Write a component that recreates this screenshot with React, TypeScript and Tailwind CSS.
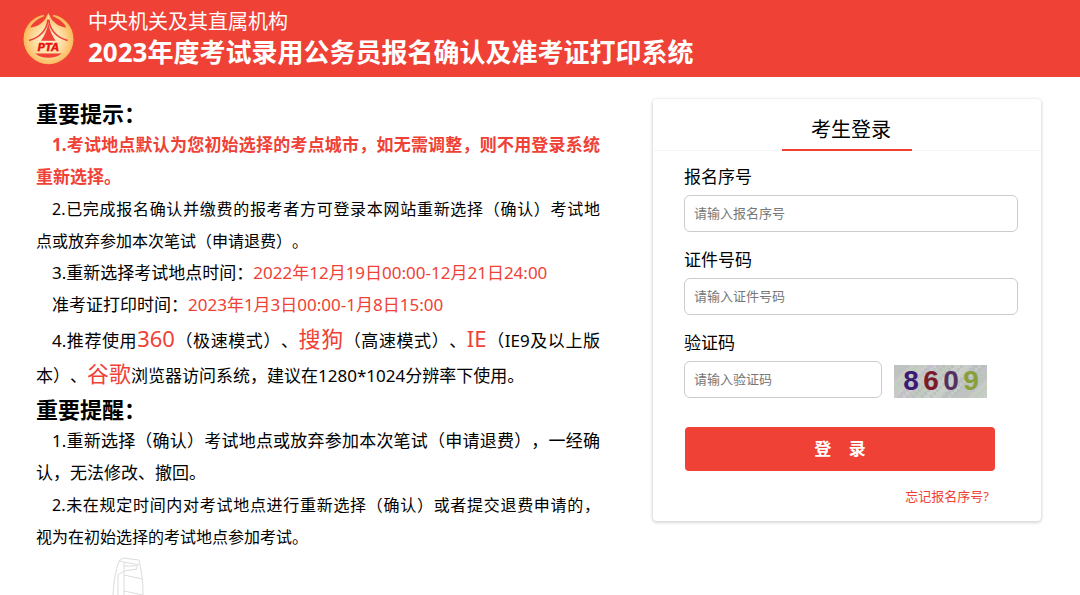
import React from "react";

interface FieldProps {
  id: string;
  label: string;
  placeholder: string;
  narrow?: boolean;
  children?: React.ReactNode;
}

const Logo: React.FC = () => (
  <svg viewBox="24 22 153 158" className="h-[53px] w-[51px] shrink-0" aria-hidden="true">
    <defs>
      <radialGradient id="gold" cx="50%" cy="52%" r="52%">
        <stop offset="0" stopColor="#fff0d0" />
        <stop offset="0.5" stopColor="#fee2ac" />
        <stop offset="1" stopColor="#fbb552" />
      </radialGradient>
    </defs>
    <circle cx="100.5" cy="103" r="75" fill="url(#gold)" />
    {/* gap at the top, with a leaf on each side */}
    <path
      d="M84 24H117L113 34C134 42 148 54 154 68C134 66 118 56 108 40L100 22L92 40C82 56 66 66 46 68C52 54 66 42 88 34Z"
      fill="#ef4136"
    />
    {/* spire */}
    <path d="M100 22C98 50 88 66 70 82H130C112 66 102 50 100 22Z" fill="#fee0a6" />
    <path
      d="M99 44C95 76 74 98 42 107M101 44C105 76 126 98 158 107"
      stroke="#ef4136"
      strokeWidth="5"
      fill="none"
    />
    <path d="M100 56C104 76 112 94 122 108H78C88 94 96 76 100 56Z" fill="#ef4136" />
    <path d="M61 146H140Q124 159 100 159Q76 159 61 146Z" fill="#ef4136" />
    <text
      x="100"
      y="138"
      textAnchor="middle"
      fontFamily="'DejaVu Sans', sans-serif"
      fontSize="31"
      fontWeight="bold"
      fontStyle="italic"
      fill="#e8140c"
      stroke="#e8140c"
    >
      PTA
    </text>
  </svg>
);

const noiseColors = ["#bcc4bb", "#c6cbc3", "#c4c0ca", "#bfcbbc", "#c9cecb", "#bbbfc1"];
const noise = Array.from({ length: 31 * 11 }, (_, i) => ({
  x: (i % 31) * 3,
  y: Math.floor(i / 31) * 3,
  color: noiseColors[(i * i * 7 + i * 13 + Math.floor(i / 5)) % 6],
}));

const digits = [
  { value: "8", x: 17, color: "#3d1a72" },
  { value: "6", x: 37, color: "#7c1a2c" },
  { value: "0", x: 57, color: "#56305f" },
  { value: "9", x: 77, color: "#87a03a" },
];

const Captcha: React.FC = () => (
  <svg viewBox="0 0 93 33" className="mt-1 h-[33px] w-[93px]" role="img" aria-label="验证码图片">
    {noise.map((n, i) => (
      <rect key={i} x={n.x} y={n.y} width="3" height="3" fill={n.color} />
    ))}
    {digits.map((d) => (
      <text
        key={d.value}
        x={d.x}
        y="25"
        textAnchor="middle"
        fontFamily="'Liberation Sans', sans-serif"
        fontSize="28"
        fontWeight="bold"
        fill={d.color}
      >
        {d.value}
      </text>
    ))}
  </svg>
);

const Building: React.FC = () => (
  <svg
    viewBox="0 0 34 38"
    className="mt-1 ml-[76px] h-[38px] w-[34px]"
    fill="none"
    stroke="#dcdcdc"
    aria-hidden="true"
  >
    <path d="M1 38Q2 18 7 4L11 1L27 3L28 8Q31 20 31 38" />
    <path d="M7 4L12 5V14L6 18V38M12 5L27 8M12 9H25V12L12 14V38M12 18L30 22M12 34L31 38" />
  </svg>
);

const Field: React.FC<FieldProps> = ({ id, label, placeholder, narrow, children }) => {
  return (
    <div>
      <label htmlFor={id} className="block leading-9">
        {label}
      </label>
      <div className="flex items-center gap-3">
        <input
          id={id}
          type="text"
          placeholder={placeholder}
          className={`h-[37px] rounded-md border border-[#ccc] bg-white px-[9px] pb-[2px] text-[13px] placeholder:text-[#777] ${
            narrow ? "w-[198px]" : "w-full"
          }`}
        />
        {children}
      </div>
    </div>
  );
};

const Browser: React.FC<{ name: string }> = ({ name }) => (
  <span className="text-[22px] leading-6 text-[#ef4136]">{name}</span>
);

// a line stretched over the full width of its paragraph
const FullLine: React.FC<{ children: React.ReactNode }> = ({ children }) => (
  <span className="block [text-align-last:justify]">{children}</span>
);

const Notice: React.FC = () => {
  return (
    <section className="min-w-0 flex-1 pt-5">
      <div className="text-justify text-[17px] leading-8 [text-spacing-trim:space-all]">
        <h2 className="text-[22px] leading-8 font-bold">重要提示：</h2>
        <p className="indent-4 font-bold text-[#ef4136]">
          1.考试地点默认为您初始选择的考点城市，如无需调整，则不用登录系统重新选择。
        </p>
        <p className="text-[16px] leading-8">
          <FullLine>
            <span className="pl-4">2.已完成报名确认并缴费的报考者方可登录本网站重新选择（确认）考试地</span>
          </FullLine>
          点或放弃参加本次笔试（申请退费）。
        </p>
        <p className="indent-4">
          3.重新选择考试地点时间：
          <span className="text-[#ef4136]">2022年12月19日00:00-12月21日24:00</span>
        </p>
        <p className="indent-4">
          准考证打印时间：
          <span className="text-[#ef4136]">2023年1月3日00:00-1月8日15:00</span>
        </p>
        <p className="pt-[2px] indent-4 leading-[35px]">
          4.推荐使用
          <Browser name="360" />
          （极速模式）、
          <Browser name="搜狗" />
          （高速模式）、
          <Browser name="IE" />
          （IE9及以上版本）、
          <Browser name="谷歌" />
          浏览器访问系统，建议在1280*1024分辨率下使用。
        </p>
        <h2 className="text-[22px] leading-8 font-bold">重要提醒：</h2>
        <p className="indent-4">
          1.重新选择（确认）考试地点或放弃参加本次笔试（申请退费），一经确认，无法修改、撤回。
        </p>
        <p className="text-[16px] leading-8">
          <FullLine>
            <span className="pl-4">2.未在规定时间内对考试地点进行重新选择（确认）或者提交退费申请的，</span>
          </FullLine>
          视为在初始选择的考试地点参加考试。
        </p>
      </div>
      <Building />
    </section>
  );
};

const LoginCard: React.FC = () => {
  return (
    <form
      onSubmit={(e) => e.preventDefault()}
      className="mt-[22px] w-[388px] shrink-0 rounded bg-white pb-3 text-[17px] shadow-[0_1px_3px_1px_#d8d8d8]"
    >
      <div className="flex justify-center border-b border-[#f5f5f5]">
        <h2 className="-mb-px w-[130px] border-b-2 border-[#ef4136] pt-4 pb-1 pl-2 text-center text-[20px] leading-[30px]">
          考生登录
        </h2>
      </div>
      <div className="flex flex-col gap-[10px] pt-2 pr-[23px] pl-[31px]">
        <Field id="serial" label="报名序号" placeholder="请输入报名序号" />
        <Field id="idcard" label="证件号码" placeholder="请输入证件号码" />
        <Field id="captcha" label="验证码" placeholder="请输入验证码" narrow>
          <Captcha />
        </Field>
      </div>
      <div className="pt-[29px] pr-[46px] pl-8">
        <button
          type="submit"
          className="h-[44px] w-full rounded bg-[#ef4136] text-[17px] font-bold text-white"
        >
          登&nbsp;&nbsp;&nbsp;&nbsp;录
        </button>
      </div>
      <div className="pt-3 pr-[52px] text-right text-[13px] leading-[26px]">
        <a href="#" className="text-[#ef4136]">
          忘记报名序号?
        </a>
      </div>
    </form>
  );
};

const App: React.FC = () => {
  return (
    <div className="bg-white font-['Noto_Sans','Noto_Sans_CJK_SC',sans-serif] text-black">
      <header className="flex items-center gap-[14px] bg-[#ef4136] py-2 pl-[23px] text-white">
        <Logo />
        <div>
          <p className="text-[20px] leading-7">中央机关及其直属机构</p>
          <h1 className="text-[26px] leading-[33px] font-bold">
            2023年度考试录用公务员报名确认及准考证打印系统
          </h1>
        </div>
      </header>
      <main className="flex items-start gap-[53px] pr-[39px] pl-9">
        <Notice />
        <LoginCard />
      </main>
    </div>
  );
};

export default App;
